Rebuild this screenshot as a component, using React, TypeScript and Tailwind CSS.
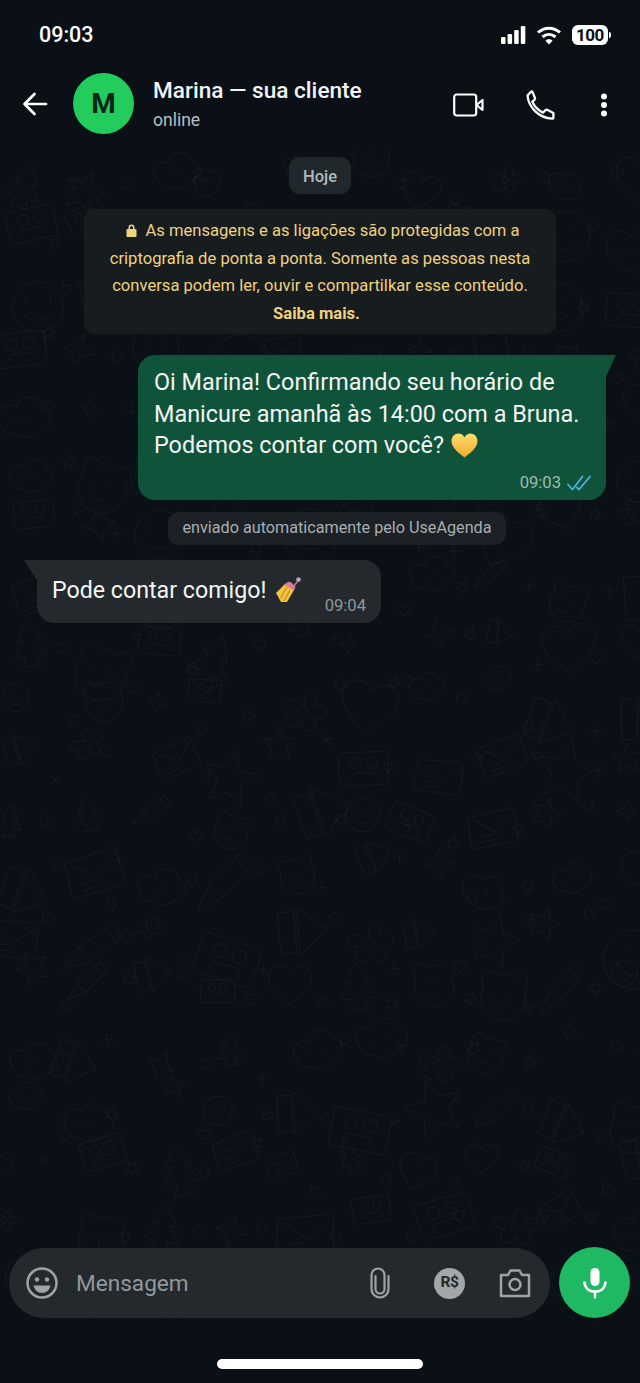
const FONT = "font-['Roboto','Liberation_Sans',sans-serif]";

// Outlines for the chat wallpaper, each drawn in a box of about 40x40
const DOODLE_SHAPES = [
  // round faces
  "M2 20a18 18 0 1 0 36 0a18 18 0 1 0-36 0M12 25c4 6 12 6 16 0M13 14l3 3M27 14l-3 3",
  "M4 20a16 16 0 1 0 32 0a16 16 0 1 0-32 0M12 14v4M28 14v4M11 25c6 5 13 4 18-1",
  // blob animal with ears
  "M8 16c-5-9 4-14 9-8 4-2 8-2 11 0 5-6 13-1 8 8 4 10-2 22-14 22S4 26 8 16zM14 20h3M24 20h3M16 28c3 3 6 3 9 0",
  // cloud
  "M5 24c-5-8 5-15 12-10 3-9 18-7 18 3 7 2 6 14-2 14-4 5-16 6-19 1-5 1-8-3-9-8zM14 22l3 2M24 21l2 3",
  // five point star
  "M20 2l5 12 13 1-10 9 3 13-11-7-11 7 3-13-10-9 13-1z",
  "M20 6c2 6 4 8 10 10-6 2-8 4-10 10-2-6-4-8-10-10 6-2 8-4 10-10z",
  // envelope, tilted
  "M3 12l30-7c2 0 3 1 3 2l3 19c0 2-1 3-2 3L8 34c-2 0-3-1-3-2zM8 14l14 8 13-13M12 26l8-2M12 30l12-3",
  // play button and pennant
  "M6 8h10v26H6zM18 6l18 15-18 15z",
  // pine tree
  "M20 2l9 14h-5l9 12h-9l3 8H13l3-8H7l9-12h-5z",
  // pencil
  "M3 37l7-15L30 3l7 7-19 20zM10 22l8 8M26 7l7 7",
  // heart
  "M20 35C10 27 3 21 3 13 3 7 8 4 12 4c4 0 6 2 8 6 2-4 4-6 8-6 4 0 9 3 9 9 0 8-7 14-17 22z",
  // cassette
  "M4 8h32c1 0 2 1 2 2v20c0 1-1 2-2 2H4c-1 0-2-1-2-2V10c0-1 1-2 2-2zM10 16a4 4 0 1 0 8 0a4 4 0 1 0-8 0M22 16a4 4 0 1 0 8 0a4 4 0 1 0-8 0M10 28l3-5h14l3 5",
  // flower
  "M20 16c-4-10 10-12 6-1 9-5 13 7 2 7 7 8-5 14-7 4-3 10-15 4-8-4-10 1-8-11 2-6zM17 20a3 3 0 1 0 6 0a3 3 0 1 0-6 0",
];

const SMALL_SHAPES = [
  "M1 6a5 5 0 1 0 10 0a5 5 0 1 0-10 0",
  "M6 11C3 9 0 7 0 4c0-3 4-5 6-1 2-4 6-2 6 1 0 3-3 5-6 7z",
  "M6 0l2 4 4 1-3 3 1 4-4-2-4 2 1-4-3-3 4-1z",
  "M2 2c2 3 6 6 9 8M3 10c1-3 4-6 8-8",
];

// Small seeded generator so the wallpaper comes out the same on every load
function seeded(seed: number) {
  return () => {
    seed = (seed + 0x6d2b79f5) | 0;
    let t = Math.imul(seed ^ (seed >>> 15), 1 | seed);
    t = (t + Math.imul(t ^ (t >>> 7), 61 | t)) ^ t;
    return ((t ^ (t >>> 14)) >>> 0) / 4294967296;
  };
}

function buildDoodles() {
  const rand = seeded(41);
  const items: { d: string; transform: string }[] = [];
  for (let row = 0; row < 21; row++) {
    for (let col = 0; col < 10; col++) {
      const x = col * 68 + rand() * 26 - 14;
      const y = 150 + row * 58 + rand() * 22 - 6;
      const d = DOODLE_SHAPES[Math.floor(rand() * DOODLE_SHAPES.length)];
      const scale = 0.8 + rand() * 0.9;
      const angle = rand() * 50 - 25;
      items.push({d, transform: `translate(${x} ${y}) rotate(${angle}) scale(${scale})`});
      const small = SMALL_SHAPES[Math.floor(rand() * SMALL_SHAPES.length)];
      items.push({
        d: small,
        transform: `translate(${x + 50 + rand() * 14} ${y + rand() * 50}) rotate(${rand() * 60})`,
      });
    }
  }
  return items;
}

const doodles = buildDoodles();

function Doodles() {
  return (
    <svg className="pointer-events-none absolute inset-0 h-full w-full" aria-hidden="true">
      <g fill="none" stroke="#ffffff" strokeOpacity="0.045" strokeWidth="1" strokeLinecap="round" strokeLinejoin="round">
        {doodles.map((item, i) => (
          <path key={i} d={item.d} transform={item.transform} vectorEffect="non-scaling-stroke" />
        ))}
      </g>
    </svg>
  );
}

function StatusBar() {
  return (
    <div className="flex h-[70px] items-start justify-between pl-[39px] pr-[32px] pt-[22px]">
      <span className="text-[21.5px] font-medium leading-[26px] text-white">09:03</span>
      <div className="mt-[3px] flex items-center gap-[10px]">
        <svg width="25" height="18" viewBox="0 0 25 18" fill="#fff">
          <rect x="0" y="11" width="4.5" height="7" rx="1.2" />
          <rect x="6.6" y="8" width="4.5" height="10" rx="1.2" />
          <rect x="13.2" y="4" width="4.5" height="14" rx="1.2" />
          <rect x="19.8" y="0" width="4.5" height="18" rx="1.2" />
        </svg>
        <svg width="26" height="19" viewBox="0 0 26 19" fill="none" stroke="#fff" strokeWidth="3">
          <path d="M2 6.5c6.5-5.8 15.5-5.800 22 0" />
          <path d="M6.5 11c4-3.500 9-3.500 13 0" />
          <path d="M13 18.500l-3.600-3.800c2-1.800 5.200-1.800 7.200 0z" fill="#fff" stroke="none" />
        </svg>
        <div className="relative flex h-[20px] w-[36px] items-center justify-center rounded-[6px] bg-white">
          <span className="text-[17px] font-bold leading-none tracking-[-0.5px] text-[#0a1117]">100</span>
          <span className="absolute -right-[3px] top-[7px] h-[6px] w-[2.5px] rounded-r-sm bg-white" />
        </div>
      </div>
    </div>
  );
}

function ChatHeader() {
  return (
    <div className="flex h-[80px] items-start pl-[22px]">
      <svg className="mt-[22px]" width="26" height="24" viewBox="0 0 26 24" fill="none" stroke="#fff" strokeWidth="2.7" strokeLinecap="round" strokeLinejoin="round">
        <path d="M24 12H2.5M12.5 2 2.5 12l10 10" />
      </svg>
      <div className="ml-[25px] mt-[3px] flex h-[61px] w-[61px] items-center justify-center rounded-full bg-[#22cc5d]">
        <span className="text-[28px] font-bold text-[#0b2418]">M</span>
      </div>
      <div className="ml-[19px] mt-[6px]">
        <div className="text-[22.6px] font-medium leading-[29px] text-[#f1f4f5]">Marina — sua cliente</div>
        <div className="mt-[3px] text-[17.5px] leading-[24px] text-[#b8bfc3]">online</div>
      </div>
      <div className="ml-auto mt-[20px] flex items-center">
        <svg width="31" height="24" viewBox="0 0 31 24" fill="none" stroke="#fff" strokeWidth="2.2" strokeLinejoin="round">
          <rect x="1.2" y="1.5" width="22" height="21" rx="2.5" />
          <path d="M23.5 12l6-5v10z" />
        </svg>
        <svg className="ml-[41px]" width="30" height="30" viewBox="0 0 30 30" fill="none" stroke="#fff" strokeWidth="2.3" strokeLinejoin="round">
          <path d="M2.5 5.5 6 1.800c.6-.5 1.300-.4 1.600.3l2.400 6c.2.500.1 1-.3 1.400L7.300 11.800c2.300 5 5.800 8.500 10.700 10.800l2.600-2.600c.4-.4 1-.5 1.500-.2l5.800 2.900c.6.300.8 1 .5 1.500v3.400c0 .7-.5 1.200-1.200 1.100C13.300 27.800 3.500 17 2.500 5.500z" />
        </svg>
        <svg className="ml-[45px] mr-[32px]" width="8" height="24" viewBox="0 0 8 24" fill="#fff">
          <circle cx="4" cy="3.5" r="3" />
          <circle cx="4" cy="12" r="3" />
          <circle cx="4" cy="20.5" r="3" />
        </svg>
      </div>
    </div>
  );
}

function HeartEmoji() {
  return (
    <svg className="ml-[7px] inline-block align-[-5px]" width="27" height="25" viewBox="0 0 27 25">
      <defs>
        <linearGradient id="heart" x1="0" y1="0" x2="0" y2="1">
          <stop offset="0" stopColor="#fddc6b" />
          <stop offset="1" stopColor="#f2ac2e" />
        </linearGradient>
      </defs>
      <path d="M13.5 24.500C8 20 .5 15 .5 8 .5 3.500 3.800.5 7.500.5c2.700 0 4.800 1.500 6 3.800 1.200-2.300 3.300-3.800 6-3.800 3.700 0 7 3 7 7.500 0 7-7.500 12-13 16.500z" fill="url(#heart)" />
    </svg>
  );
}

// Painted nails: yellow fingers, pink tips and the polish brush above them
function NailEmoji() {
  return (
    <svg className="ml-[9px] inline-block align-[-5px]" width="27" height="27" viewBox="0 0 27 27">
      <path d="M19 10l4.500-6" stroke="#a98aa6" strokeWidth="1.3" />
      <circle cx="23.5" cy="3.5" r="2.3" fill="#cf9cc8" />
      <path d="M1 17 10 8l9 6-7 12H6z" fill="#f4c23c" />
      <path d="M5.5 22 12 11M9 25l6-11" stroke="#c98f20" strokeWidth="1.3" />
      <path d="M9 8.500 14 5.500l3 1.500 3.500 4L19 14.500z" fill="#d9799d" />
    </svg>
  );
}

function DoubleCheck() {
  return (
    <svg width="24" height="16" viewBox="0 0 24 16" fill="none" stroke="#4fb0e6" strokeWidth="1.8" strokeLinecap="round" strokeLinejoin="round">
      <path d="M1 9.500l4.500 5L15.500 1.500" />
      <path d="M10 12.500l2 2L23 1.500" />
    </svg>
  );
}

function Messages() {
  return (
    <div className="relative flex flex-1 flex-col items-center pt-[7px]">
      <div className="flex h-[37px] w-[62px] items-center justify-center rounded-[11px] bg-[#20282c] pt-[3px] text-[16.5px] font-medium text-[#b3babd]">Hoje</div>

      <div className="mt-[15px] h-[125px] w-[472px] rounded-[11px] bg-[#171c1f] pt-[8px] text-center text-[16.6px] leading-[27.5px] text-[#efd27f]">
        <svg className="ml-[6px] mr-[8px] inline-block align-[-1px]" width="11" height="13" viewBox="0 0 11 13" fill="#efd27f">
          <path d="M2.5 5V3.500a3 3 0 0 1 6 0V5h1a1 1 0 0 1 1 1v6a1 1 0 0 1-1 1h-8a1 1 0 0 1-1-1V6a1 1 0 0 1 1-1zm1.500 0h3V3.500a1.500 1.500 0 0 0-3 0z" />
        </svg>
        As mensagens e as ligações são protegidas com a<br />
        criptografia de ponta a ponta. Somente as pessoas nesta<br />
        conversa podem ler, ouvir e compartilkar esse conteúdo.<br />
        <span className="pr-[7px] font-bold">Saiba mais.</span>
      </div>

      <div className="relative mt-[21px] h-[145px] w-[468px] translate-x-[52px] rounded-[17px] rounded-tr-none bg-[#0f533a] pl-[16px] pt-[12px] text-[23.4px] leading-[31.5px] text-[#f2f5f4]">
        <span className="absolute -right-[10px] top-0 h-[24px] w-[11px] bg-[#0f533a] [clip-path:polygon(0_0,100%_0,0_100%)]" />
        Oi Marina! Confirmando seu horário de<br />
        Manicure amanhã às 14:00 com a Bruna.<br />
        Podemos contar com você?<HeartEmoji />
        <div className="absolute bottom-[7px] right-[15px] flex items-center gap-[6px] text-[16.6px] leading-[20px] text-[#9dbcae]">
          09:03
          <DoubleCheck />
        </div>
      </div>

      <div className="mt-[12px] flex h-[33px] w-[338px] translate-x-[17px] items-center justify-center rounded-[11px] bg-[#1b2124] text-[16.2px] text-[#a8aeb1]">
        enviado automaticamente pelo UseAgenda
      </div>

      <div className="relative mt-[15px] h-[63px] w-[344px] -translate-x-[111px] rounded-[17px] rounded-tl-none bg-[#23292c] pl-[15px] pt-[15px] text-[23.2px] leading-[31px] text-[#f2f5f4]">
        <span className="absolute -left-[13px] top-0 h-[22px] w-[14px] bg-[#23292c] [clip-path:polygon(0_0,100%_0,100%_100%)]" />
        Pode contar comigo!<NailEmoji />
        <span className="absolute bottom-[7px] right-[15px] text-[16.6px] leading-[20px] text-[#8f9699]">09:04</span>
      </div>
    </div>
  );
}

function Composer() {
  return (
    <div className="relative flex h-[135px] flex-col">
      <div className="relative flex items-start pl-[9px]">
        <div className="flex h-[70px] w-[541px] items-center rounded-full bg-[#23292d]">
          <svg className="ml-[17px]" width="32" height="32" viewBox="0 0 32 32" fill="none" stroke="#9ea3a5" strokeWidth="2.5">
            <circle cx="16" cy="16" r="14.5" />
            <circle cx="11" cy="12.5" r="2.2" fill="#9ea3a5" stroke="none" />
            <circle cx="21" cy="12.5" r="2.2" fill="#9ea3a5" stroke="none" />
            <path d="M7.5 18.500h17c-.8 4.500-4.300 7.500-8.500 7.500s-7.700-3-8.500-7.500z" fill="#9ea3a5" stroke="none" />
          </svg>
          <span className="ml-[18px] pt-[2px] text-[22.6px] text-[#92999c]">Mensagem</span>
          <svg className="ml-auto" width="20" height="32" viewBox="0 0 20 32" fill="none" stroke="#9ea3a5" strokeWidth="2.2" strokeLinecap="round">
            <path d="M18.5 9V22a8.500 8.500 0 0 1-17 0V8a6.500 6.500 0 0 1 13 0V22a4.500 4.500 0 0 1-9 0V9" />
          </svg>
          <div className="ml-[44px] flex h-[31px] w-[31px] items-center justify-center rounded-full bg-[#a3a7a9] text-[15.5px] font-bold tracking-[-0.5px] text-[#23292d]">R$</div>
          <svg className="ml-[34px] mr-[19px]" width="32" height="32" viewBox="0 0 32 32" fill="none" stroke="#9ea3a5" strokeWidth="2.5" strokeLinejoin="round">
            <path d="M2 8h7l2.500-4.500h9L23 8h7v21H2z" />
            <circle cx="16" cy="17.5" r="5.5" />
          </svg>
        </div>
        <div className="ml-[9px] -mt-[1px] flex h-[71px] w-[71px] items-center justify-center rounded-full bg-[#1fb863]">
          <svg width="24" height="32" viewBox="0 0 24 32" fill="#fff">
            <rect x="7.5" y="1" width="9" height="18" rx="4.5" />
            <path d="M1.5 14.500c0 6.500 4.500 10 10.500 10s10.500-3.500 10.500-10" fill="none" stroke="#fff" strokeWidth="2.6" />
            <rect x="10.8" y="24" width="2.4" height="7.5" />
          </svg>
        </div>
      </div>
      {/* solid strip under the composer, holding the home indicator */}
      <div className="relative mt-[1px] flex flex-1 items-start justify-center bg-[#0a1016] pt-[40px]">
        <div className="h-[10px] w-[206px] rounded-full bg-white" />
      </div>
    </div>
  );
}

export default function App() {
  return (
    <div className={`${FONT} relative flex h-[1383px] w-[640px] flex-col overflow-hidden bg-[#0a1016]`}>
      <Doodles />
      <div className="relative z-10 bg-[#0a1016]">
        <StatusBar />
        <ChatHeader />
      </div>
      <Messages />
      <Composer />
    </div>
  );
}
